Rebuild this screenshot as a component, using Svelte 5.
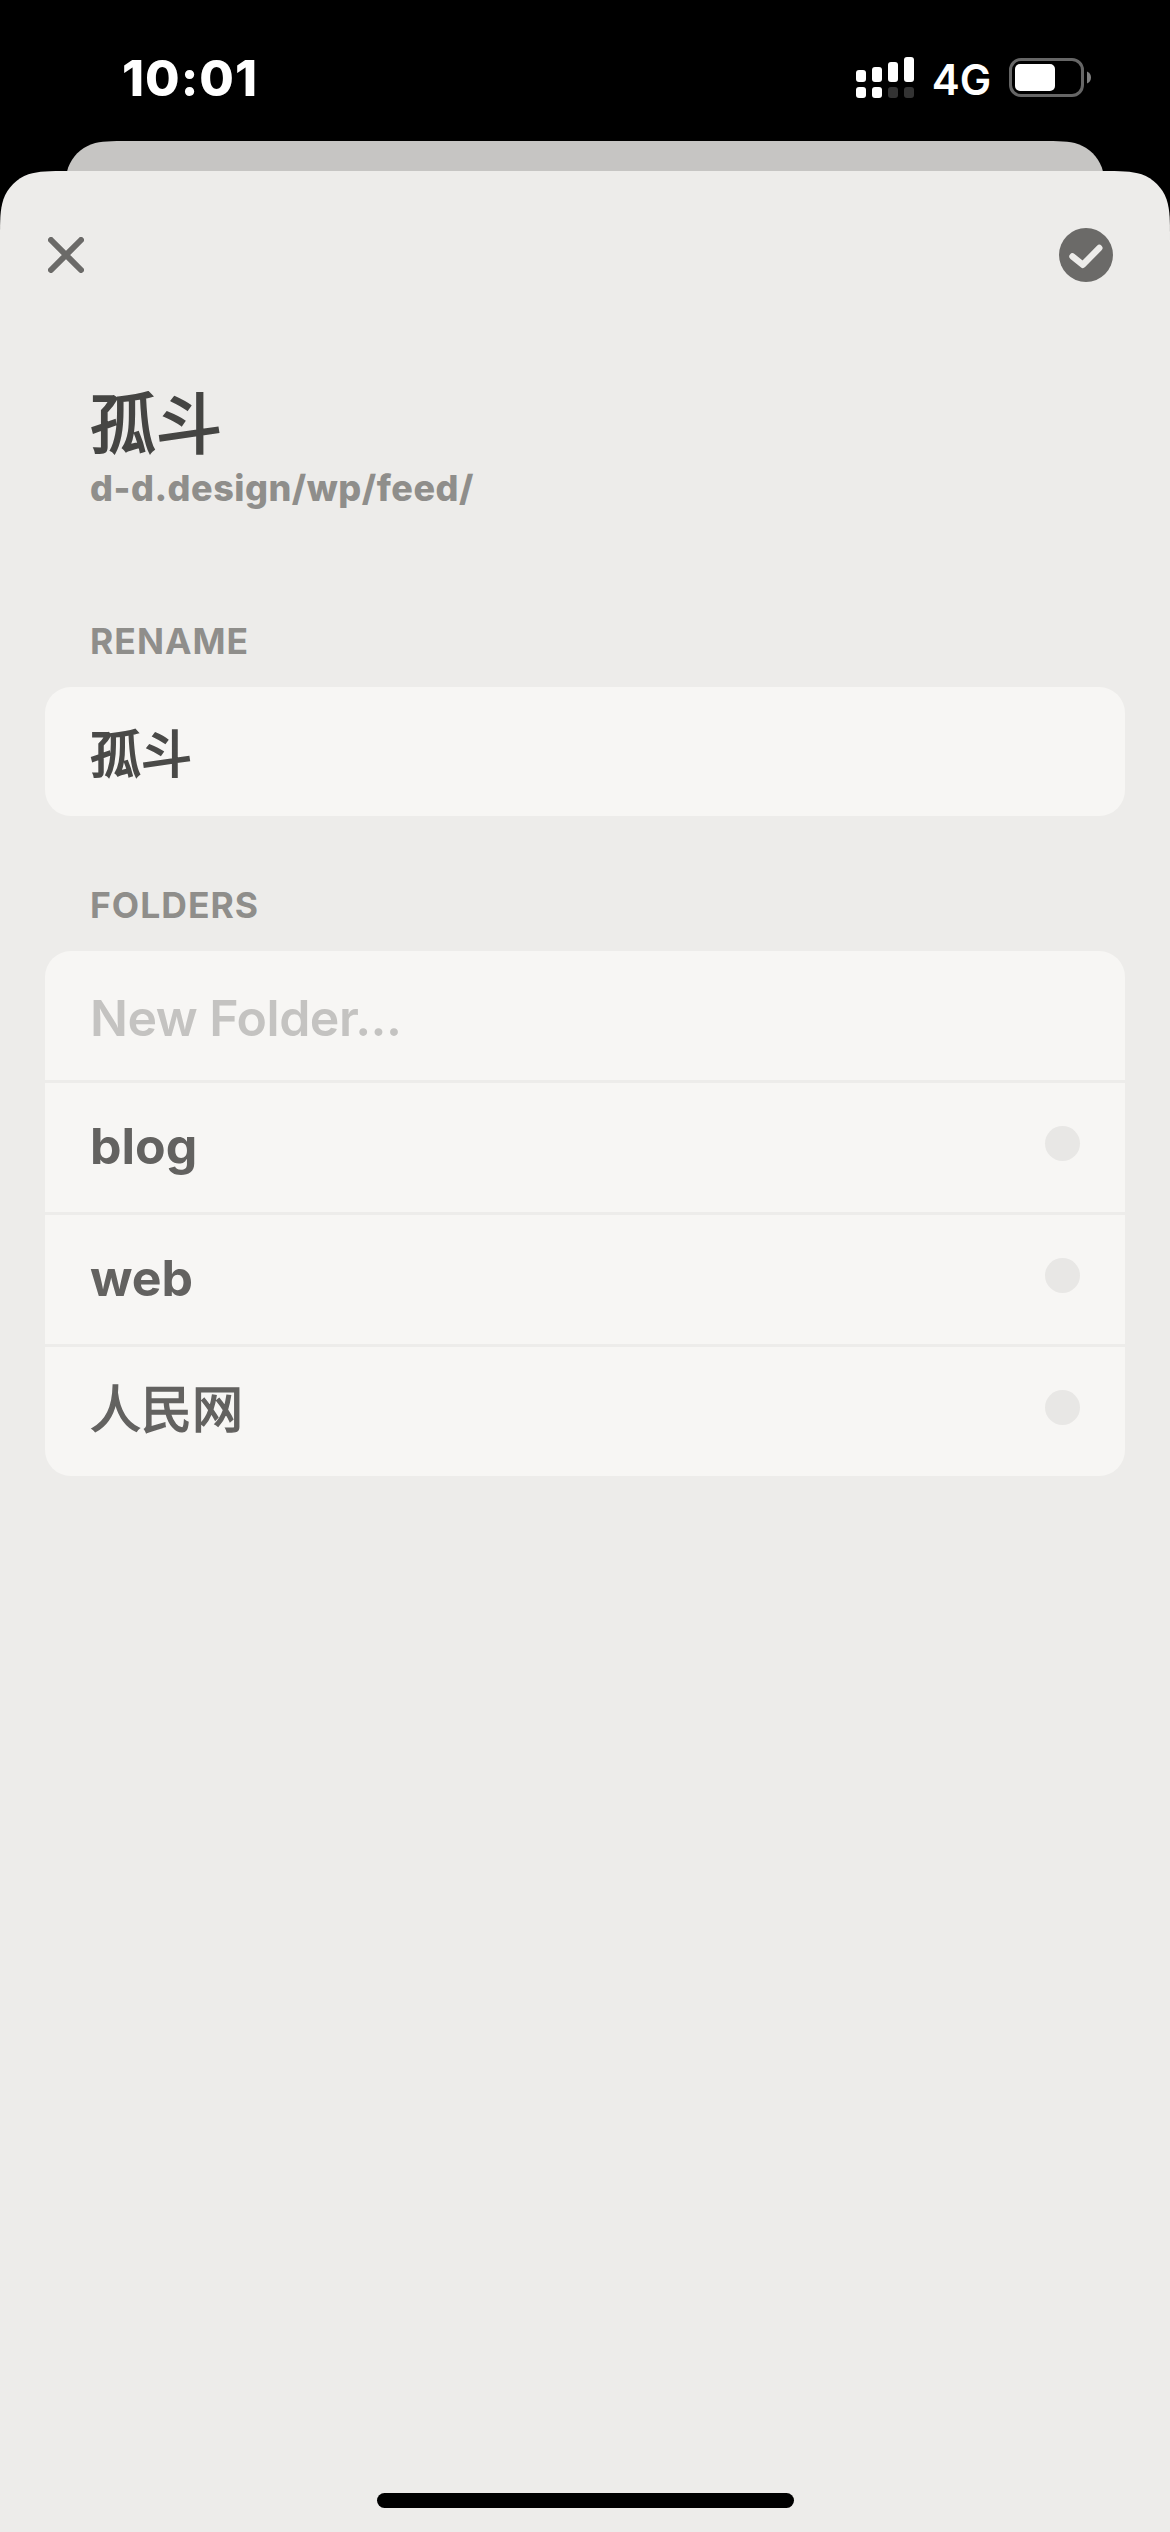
<script>
    let feed = { name: "孤斗", url: "d-d.design/wp/feed/" };
    let folders = [
        { name: "blog" },
        { name: "web" },
        { name: "人民网", cjk: true },
    ];
    // x and top of each signal bar, on = second line dot
    let bars = [
        { x: 0, y: 13, on: true },
        { x: 16, y: 10, on: true },
        { x: 32, y: 5, on: false },
        { x: 48, y: 0, on: false },
    ];
</script>

<div class="screen">
    <div class="status">
        <div class="time">10:01</div>
        <div class="indicators">
            <svg class="signal" width="58" height="41" viewBox="0 0 58 41">
                {#each bars as bar}
                    <rect x={bar.x} y={bar.y} width="10" height={25 - bar.y} rx="3" fill="#fff" />
                    <rect x={bar.x} y="30" width="10" height="11" rx="3" fill={bar.on ? "#fff" : "#333"} />
                {/each}
            </svg>
            <div class="network">4G</div>
            <svg class="battery" width="82" height="39" viewBox="0 0 82 39">
                <rect x="1.5" y="1.5" width="72" height="36" rx="10.5" fill="none" stroke="#666" stroke-width="3" />
                <rect x="6" y="6" width="40" height="27" rx="5" fill="#fff" />
                <path d="M78 13.5C80.5 14.5 82 16.8 82 19.5S80.5 24.5 78 25.5Z" fill="#808080" />
            </svg>
        </div>
    </div>
    <div class="behind"></div>
    <div class="sheet">
        <div class="toolbar">
            <svg width="36" height="36" viewBox="0 0 36 36">
                <path d="M3 3L33 33M33 3L3 33" stroke="#6b6a68" stroke-width="6" stroke-linecap="round" />
            </svg>
            <svg width="54" height="54" viewBox="0 0 54 54">
                <circle cx="27" cy="27" r="27" fill="#6b6a68" />
                <path d="M13.5 28.5L23.8 36.8L40.3 20" fill="none" stroke="#edecea" stroke-width="6.4" stroke-linecap="round" stroke-linejoin="round" />
            </svg>
        </div>
        <div class="title">{feed.name}</div>
        <div class="url">{feed.url}</div>
        <div class="label rename">RENAME</div>
        <div class="card">
            <div class="row name">{feed.name}</div>
        </div>
        <div class="label folders">FOLDERS</div>
        <div class="card">
            <div class="row placeholder">New Folder...</div>
            {#each folders as folder}
                <div class="row">
                    <span class="folder" class:cjk={folder.cjk}>{folder.name}</span>
                    <span class="dot"></span>
                </div>
            {/each}
        </div>
        <div class="home"></div>
    </div>
</div>

<style>
    :global(body) {
        background: #000;
    }

    .screen {
        width: 1170px;
        height: 2532px;
        display: flex;
        flex-direction: column;
        background: #000;
        overflow: hidden;
        font-family: Inter, "Noto Sans CJK SC", sans-serif;
    }

    .status {
        height: 141px;
        display: flex;
        justify-content: space-between;
        padding: 0 79px 0 122px;
        box-sizing: border-box;
        color: #fff;
    }

    .time {
        margin-top: 48px;
        font-size: 50px;
        line-height: 60px;
        font-weight: 800;
        letter-spacing: 1px;
    }

    .indicators {
        display: flex;
        align-items: flex-start;
    }

    .signal {
        margin-top: 57px;
    }

    .network {
        width: 95px;
        margin-top: 55px;
        text-align: center;
        font-size: 42px;
        line-height: 50px;
        font-weight: 600;
    }

    .battery {
        margin-top: 58px;
    }

    .behind {
        width: 1040px;
        height: 30px;
        align-self: center;
        background: #c6c5c3;
        clip-path: path("M0 64.2C0 45.72 0 36.47 3.15 26.52C7.1 15.66 15.66 7.1 26.52 3.15C36.47 0 45.72 0 64.2 0H975.8C994.28 0 1003.53 0 1013.48 3.15C1024.34 7.1 1032.9 15.66 1036.85 26.52C1040 36.47 1040 45.72 1040 64.2Z");
    }

    .sheet {
        flex: 1;
        display: flex;
        flex-direction: column;
        padding: 0 45px;
        background: #edecea;
        clip-path: path("M0 68.79C0 48.98 0 39.08 3.37 28.42C7.61 16.78 16.78 7.61 28.42 3.37C39.08 0 48.98 0 68.79 0H1101.21C1121.02 0 1130.92 0 1141.58 3.37C1153.22 7.61 1162.39 16.78 1166.63 28.42C1170 39.08 1170 48.98 1170 68.79V2361H0Z");
    }

    .toolbar {
        display: flex;
        justify-content: space-between;
        align-items: center;
        height: 54px;
        padding: 57px 12px 0 3px;
    }

    .title {
        margin-top: 97px;
        padding-left: 45px;
        font-size: 66px;
        line-height: 90px;
        font-weight: 400;
        -webkit-text-stroke: 2px #454543;
        color: #454543;
    }

    .url {
        margin-top: -3px;
        padding-left: 45px;
        font-size: 36px;
        line-height: 44px;
        font-weight: 800;
        letter-spacing: 0.5px;
        color: #8f8e8b;
    }

    .label {
        padding-left: 45px;
        font-size: 35.5px;
        line-height: 44px;
        font-weight: 650;
        letter-spacing: 1px;
        color: #8f8e8b;
    }

    .rename {
        margin-top: 110px;
        margin-bottom: 23px;
    }

    .folders {
        margin-top: 68px;
        margin-bottom: 23px;
    }

    .card {
        display: flex;
        flex-direction: column;
        row-gap: 3px;
        border-radius: 26px;
        overflow: hidden;
    }

    .row {
        height: 129px;
        display: flex;
        justify-content: space-between;
        align-items: center;
        padding: 0 45px;
        box-sizing: border-box;
        background: #f7f6f4;
        font-size: 50px;
        line-height: 60px;
        font-weight: 700;
        color: #636260;
    }

    .row.name {
        padding-top: 6px;
        font-size: 51px;
        font-weight: 400;
        -webkit-text-stroke: 1.8px #4a4a48;
        color: #4a4a48;
    }

    .row.placeholder {
        padding-top: 4px;
        font-weight: 600;
        letter-spacing: -0.5px;
        color: #c4c3c1;
    }

    .folder {
        margin-bottom: 4px;
    }

    .folder.cjk {
        margin-bottom: 3px;
        font-size: 51px;
        font-weight: 400;
        -webkit-text-stroke: 1.5px #636260;
    }

    .dot {
        width: 35px;
        height: 35px;
        margin-bottom: 8px;
        border-radius: 50%;
        background: #e8e7e5;
    }

    .home {
        width: 417px;
        height: 15px;
        margin: auto auto 24px;
        border-radius: 8px;
        background: #000;
    }
</style>
